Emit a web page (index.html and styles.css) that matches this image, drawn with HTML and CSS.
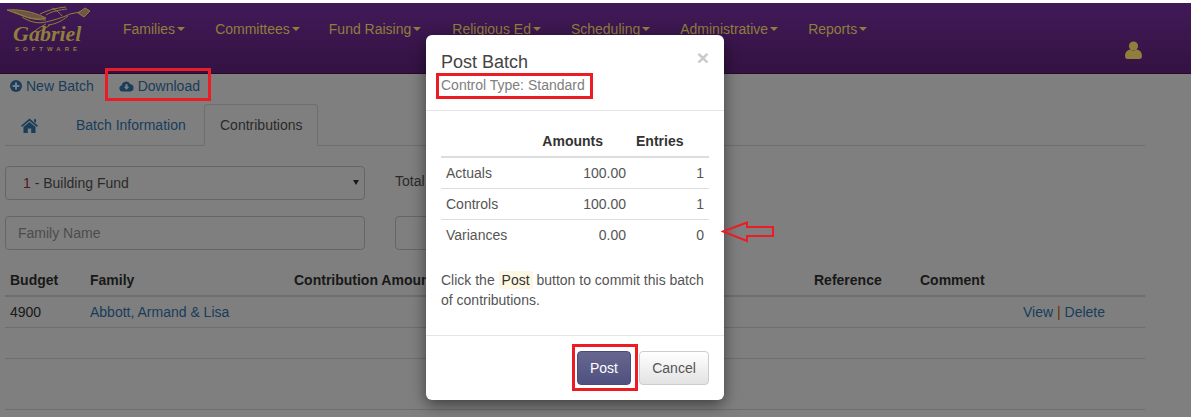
FILE: index.html
```html
<!DOCTYPE html>
<html lang="en">
<head>
<meta charset="utf-8">
<title>Post Batch</title>
<link rel="stylesheet" href="styles.css">
</head>
<body>
<div class="strip"></div>
<div class="app">
  <header class="nav">
    <a class="logo" href="#">
      <svg class="wing" width="92" height="32" viewBox="0 3 92 32" fill="none" stroke="#8f7e3c" stroke-width="1">
        <path d="M7 10 C18 9 32 11 46 18 C38 20 30 19 24 16 C18 14 12 12 7 10Z" fill="#8f7e3c" fill-opacity=".6"/>
        <path d="M14 12 C24 17 34 20 46 20 M22 17 C30 22 38 24 46 22"/>
        <path d="M40 14 C48 10 56 8 66 7 M46 15 C52 11 60 10 67 9 M52 8 C56 10 60 13 62 16"/>
        <path d="M46 22 C54 20 62 18 70 14 L80 12 M48 25 C56 24 62 21 68 16"/>
        <path d="M46 24 C40 27 36 30 31 34 M50 25 C46 28 42 30 38 32"/>
        <path d="M78 13 L85 8 L90 11 L84 17Z" fill="#8f7e3c" fill-opacity=".6"/>
      </svg>
      <span class="logo-name">Gabriel</span>
      <span class="logo-sub">SOFTWARE</span>
    </a>
    <nav class="menu">
      <a class="menu-item" href="#">Families<i class="caret"></i></a>
      <a class="menu-item" href="#">Committees<i class="caret"></i></a>
      <a class="menu-item" href="#">Fund Raising<i class="caret"></i></a>
      <a class="menu-item" href="#">Religious Ed<i class="caret"></i></a>
      <a class="menu-item" href="#">Scheduling<i class="caret"></i></a>
      <a class="menu-item" href="#">Administrative<i class="caret"></i></a>
      <a class="menu-item" href="#">Reports<i class="caret"></i></a>
    </nav>
    <svg class="user" width="17" height="18" viewBox="0 0 17 18"><circle cx="8.5" cy="5" r="4.6" fill="#8f7e3c"/><path d="M0 15 C0 10.5 3 9 5.5 8.5 C7 10 10 10 11.5 8.5 C14 9 17 10.5 17 15 C17 17 16 18 14.5 18 L2.5 18 C1 18 0 17 0 15Z" fill="#8f7e3c"/></svg>
  </header>

  <main class="content">
    <div class="actions">
      <a class="link" href="#"><svg class="ic" width="12" height="12" viewBox="0 0 12 12"><circle cx="6" cy="6" r="6" fill="#337ab7"/><path d="M6 2.6V9.4M2.6 6H9.4" stroke="#fff" stroke-width="2"/></svg>New Batch</a>
      <span class="sep"></span>
      <a class="link" href="#"><svg class="ic ic-cloud" width="15" height="12" viewBox="0 0 15 12"><path d="M3.4 11.5A3 3 0 0 1 2.6 5.6A4.6 4.6 0 0 1 11.3 4.2A3.7 3.7 0 0 1 11.6 11.5Z" fill="#337ab7"/><path d="M6.4 4.3H8.6V6.8H10.3L7.5 9.7L4.7 6.8H6.4Z" fill="#fff"/></svg>Download</a>
    </div>

    <div class="tabs">
      <a class="tab tab-home" href="#"><svg width="17" height="15" viewBox="0 0 17 15"><path d="M8.5 0.5L17 7.8L15.9 9L8.5 2.7L1.1 9L0 7.8Z M13 1.3H15V5L13 3.3Z M8.5 4L14.5 9V15H10.2V10.6H6.8V15H2.5V9Z" fill="#337ab7"/></svg></a>
      <a class="tab tab-info" href="#">Batch Information</a>
      <a class="tab tab-active" href="#">Contributions</a>
    </div>

    <div class="form-row row-select">
      <div class="select"><span class="one">1</span> - Building Fund<i class="select-arrow"></i></div>
      <div class="total">Total</div>
    </div>
    <div class="form-row row-input">
      <div class="input">Family Name</div>
      <div class="input input-b"></div>
    </div>

    <table class="grid">
      <colgroup>
        <col class="c-budget"><col class="c-family"><col class="c-amount"><col class="c-ref"><col class="c-comment"><col class="c-act">
      </colgroup>
      <thead>
        <tr><th>Budget</th><th>Family</th><th>Contribution Amount</th><th>Reference</th><th>Comment</th><th></th></tr>
      </thead>
      <tbody>
        <tr><td>4900</td><td><a class="tlink" href="#">Abbott, Armand &amp; Lisa</a></td><td></td><td></td><td></td><td><a class="tlink" href="#">View</a> <span class="pipe">|</span> <a class="tlink" href="#">Delete</a></td></tr>
        <tr><td colspan="6">&nbsp;</td></tr>
        <tr class="tall"><td colspan="6">&nbsp;</td></tr>
      </tbody>
    </table>
  </main>

  <div class="backdrop"></div>

  <section class="modal">
    <div class="modal-head">
      <span class="close">×</span>
      <h4 class="modal-title">Post Batch</h4>
      <div class="modal-sub">Control Type: Standard</div>
    </div>
    <div class="modal-body">
      <table class="summary">
        <thead><tr><th></th><th class="num amt">Amounts</th><th class="num ent">Entries</th></tr></thead>
        <tbody>
          <tr><td>Actuals</td><td class="num">100.00</td><td class="num">1</td></tr>
          <tr><td>Controls</td><td class="num">100.00</td><td class="num">1</td></tr>
          <tr><td>Variances</td><td class="num">0.00</td><td class="num">0</td></tr>
        </tbody>
      </table>
      <p class="note">Click the <mark class="hl">Post</mark> button to commit this batch of contributions.</p>
    </div>
    <div class="modal-foot">
      <button class="btn btn-post">Post</button>
      <button class="btn btn-cancel">Cancel</button>
    </div>
  </section>

  <div class="mark mark-download"></div>
  <div class="mark mark-type"></div>
  <div class="mark mark-post"></div>
  <svg class="mark-arrow" width="54" height="22" viewBox="0 0 54 22" fill="none" stroke="#ed1c24" stroke-width="2"><path d="M2 10.5L26 1.5V6H52V15H26V20Z"/></svg>
</div>
</body>
</html>
```
FILE: styles.css
```css
* { box-sizing: border-box; }
html, body { margin: 0; padding: 0; }
body {
  width: 1191px;
  height: 417px;
  overflow: hidden;
  background: #fff;
  font-family: "Liberation Sans", Arial, sans-serif;
  font-size: 14px;
  line-height: 20px;
  color: #333;
}
a { text-decoration: none; }
.strip { height: 3px; background: #fff; }
.app { position: relative; height: 414px; overflow: hidden; background: #fff; }

/* nav: sits over the backdrop, its colours already carry the dimming */
.nav {
  height: 71px;
  display: flex;
  align-items: flex-start;
  background: linear-gradient(#401a58, #341242);
  border-bottom: 1px solid #230b2d;
  position: relative;
  z-index: 1;
}
.logo {
  width: 123px;
  flex: none;
  position: relative;
  display: block;
  height: 70px;
  color: #8f7e3c;
}
.wing { position: absolute; left: 0; top: 0; }
.logo-name {
  position: absolute;
  left: 13px;
  top: 19px;
  font-family: "Liberation Serif", serif;
  font-style: italic;
  font-weight: bold;
  font-size: 22px;
  line-height: 24px;
}
.logo-sub {
  position: absolute;
  left: 15px;
  top: 42px;
  font-size: 6px;
  font-weight: bold;
  line-height: 8px;
  letter-spacing: 4px;
}
.menu { display: flex; padding-top: 16px; }
.menu-item {
  color: #8f7e3c;
  display: flex;
  align-items: center;
  height: 20px;
  margin-right: 30px;
}
.menu-item:nth-child(2) { margin-right: 29px; }
.menu-item:nth-child(3) { margin-right: 31px; }
.caret {
  display: block;
  margin-left: 2px;
  width: 0; height: 0;
  border-top: 4px solid #8f7e3c;
  border-left: 4px solid transparent;
  border-right: 4px solid transparent;
}
.user { position: absolute; right: 49px; top: 38px; }

/* content */
.content { padding: 0 46px 0 5px; }
.actions { display: flex; align-items: center; height: 24px; padding-left: 5px; }
.link { color: #337ab7; display: flex; align-items: center; }
.ic { margin-right: 4px; }
.sep { width: 1px; height: 15px; background: #ddd; margin: 0 13px 0 11px; }

.tabs { display: flex; height: 42px; border-bottom: 1px solid #ddd; margin-top: 6px; align-items: stretch; }
.tab { color: #337ab7; display: flex; align-items: center; height: 42px; padding: 0 15px; }
.tab-home { width: 56px; padding-left: 16px; }
.tab-info { width: 143px; }
.tab-active {
  color: #555;
  background: #fff;
  width: 114px;
  border: 1px solid #ddd;
  border-bottom-color: #fff;
  border-radius: 4px 4px 0 0;
}

.form-row { display: grid; grid-template-columns: 360px 1fr; column-gap: 30px; }
.row-select { margin-top: 20px; }
.row-input { margin-top: 16px; }
.select, .input {
  height: 34px;
  border: 1px solid #ccc;
  border-radius: 4px;
  padding: 6px 12px;
  position: relative;
}
.select { color: #555; padding-left: 17px; }
.one { color: #a33; }
.select-arrow {
  position: absolute;
  right: 5px;
  top: 13px;
  border-top: 5px solid #333;
  border-left: 3px solid transparent;
  border-right: 3px solid transparent;
}
.input { color: #999; }
.total { color: #555; padding-top: 5px; }
.input-b { width: 200px; }

.grid { width: 1140px; margin-top: 15px; border-collapse: collapse; table-layout: fixed; }
.c-budget { width: 80px; }
.c-family { width: 204px; }
.c-amount { width: 520px; }
.c-ref { width: 106px; }
.c-comment { width: 103px; }
.grid th {
  text-align: left;
  padding: 5px;
  height: 31px;
  font-weight: bold;
  border-bottom: 2px solid #ddd;
  color: #333;
  white-space: nowrap;
}
.grid td { padding: 5px; height: 31px; border-bottom: 1px solid #ddd; color: #333; }
.tall td { height: 51px; }
.tlink { color: #337ab7; }
.pipe { color: #c60; }

.backdrop { position: absolute; inset: 0; background: rgba(0, 0, 0, .5); }

/* modal */
.modal {
  position: absolute;
  z-index: 2;
  left: 426px;
  top: 32px;
  width: 298px;
  height: 365px;
  background: #fff;
  border-radius: 6px;
  box-shadow: 0 5px 15px rgba(0, 0, 0, .5);
  display: flex;
  flex-direction: column;
}
.modal-head { height: 76px; padding: 16px 15px 0; border-bottom: 1px solid #e5e5e5; position: relative; flex: none; }
.close {
  position: absolute;
  right: 15px;
  top: 12px;
  font-size: 21px;
  font-weight: bold;
  line-height: 21px;
  color: #c9c9c9;
}
.modal-title { margin: 0; font-size: 18px; font-weight: normal; line-height: 22px; color: #444; }
.modal-sub { color: #808080; line-height: 20px; margin-top: 2px; }
.modal-body { flex: 1; padding: 14px 15px 15px; }
.summary { width: 268px; border-collapse: collapse; table-layout: fixed; }
.summary th { height: 32px; padding: 5px; font-weight: bold; border-bottom: 2px solid #ddd; color: #333; }
.summary td { height: 31px; padding: 5px; border-top: 1px solid #ddd; color: #555; }
.summary tbody tr:first-child td { border-top: 0; }
.summary th:first-child, .summary td:first-child { width: 88px; }
.summary .num { text-align: right; }
.summary td.num:nth-child(2), .summary th.num:nth-child(2) { width: 102px; }
.summary th.amt { padding-right: 28px; white-space: nowrap; }
.summary th.ent { padding-right: 26px; }
.note { margin: 19px 0 0; color: #555; }
.hl { background: #fcf8e3; color: #333; padding: 1px 3px; }
.modal-foot {
  height: 65px;
  flex: none;
  border-top: 1px solid #e5e5e5;
  padding: 15px;
  display: flex;
  justify-content: flex-end;
  gap: 8px;
}
.btn {
  font: inherit;
  height: 34px;
  border-radius: 4px;
  padding: 0 12px;
}
.btn-post { width: 54px; color: #fff; border: 1px solid #4a4a7c; background: linear-gradient(#66668f, #515180); }
.btn-cancel { width: 70px; color: #555; border: 1px solid #ccc; background: linear-gradient(#fff, #e2e2e2); }

/* annotations */
.mark { position: absolute; z-index: 3; border: 3px solid #ed1c24; }
.mark-download { left: 105px; top: 65px; width: 106px; height: 33px; }
.mark-type { left: 436px; top: 70px; width: 157px; height: 26px; }
.mark-post { left: 572px; top: 341px; width: 66px; height: 47px; }
.mark-arrow { position: absolute; z-index: 3; left: 721px; top: 218px; }
```
